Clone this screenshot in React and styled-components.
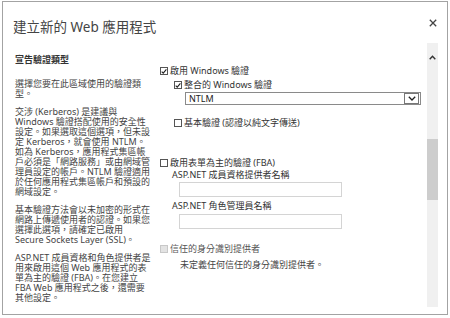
import React from "react";
import styled, { createGlobalStyle } from "styled-components";

const GlobalStyle = createGlobalStyle`
  html, body { margin: 0; padding: 0; background: #fff; }
  body { font-family: "Noto Sans", "Noto Sans CJK TC", sans-serif; }
  * { box-sizing: border-box; }
`;

const Dialog = styled.div`
  margin: 1px 0 0 2px;
  width: 446px;
  height: 314px;
  border: 1px solid #a3a3a3;
  background: #fff;
  display: flex;
  flex-direction: column;
`;

const Header = styled.div`
  height: 41px;
  flex: none;
  display: flex;
  align-items: center;
  justify-content: space-between;
  padding: 2px 7px 0 10px;
`;

const Title = styled.h1`
  margin: 0;
  font-size: 13.5px;
  font-weight: 400;
  color: #444;
  line-height: 20px;
  padding-top: 6px;
`;

const CloseButton = styled.button`
  border: 0;
  background: none;
  padding: 0;
  width: 14px;
  height: 14px;
  display: flex;
  align-items: center;
  justify-content: center;
  margin-top: -2px;
`;

const Body = styled.div`
  flex: 1;
  min-height: 0;
  display: flex;
  padding: 0 9px 7px 0;
`;

const Viewport = styled.div`
  flex: 1;
  overflow: hidden;
  display: flex;
  align-items: flex-start;
`;

const Help = styled.div`
  width: 157px;
  flex: none;
  padding: 12px 0 0 12px;
  font-size: 9px;
  line-height: 10px;
  color: #444;
  white-space: nowrap;
`;

const HelpHeading = styled.div`
  font-weight: 700;
  color: #333;
  margin-bottom: 14px;
`;

const HelpPara = styled.p`
  margin: 0 0 8px;
`;

const Form = styled.div`
  flex: 1;
  display: flex;
  flex-direction: column;
  align-items: flex-start;
  padding-top: 22px;
  font-size: 9px;
  line-height: 12px;
  color: #333;
  white-space: nowrap;
`;

const CheckRow = styled.label`
  display: flex;
  align-items: center;
  gap: 2px;
  margin-left: ${(p) => p.$indent || 0}px;
  margin-top: ${(p) => p.$top || 0}px;
  color: ${(p) => (p.$disabled ? "#555" : "#333")};
`;

const Box = styled.span`
  width: 8px;
  height: 8px;
  flex: none;
  border: 1px solid ${(p) => (p.$disabled ? "#c8c8c8" : "#555")};
  background: ${(p) => (p.$disabled ? "#e3e3e3" : "#fff")};
  display: flex;
  align-items: center;
  justify-content: center;
`;

const Select = styled.div`
  margin: 1px 0 0 25px;
  width: 236px;
  height: 13px;
  border: 1px solid #8a8a8a;
  display: flex;
  align-items: center;
  font-size: 9px;
  color: #222;
`;

const SelectText = styled.span`
  flex: 1;
  padding-left: 3px;
  line-height: 11px;
`;

const SelectArrow = styled.span`
  width: 15px;
  height: 11px;
  margin-right: 1px;
  border: 1px solid #777;
  display: flex;
  align-items: center;
  justify-content: center;
`;

const FieldLabel = styled.div`
  margin: ${(p) => p.$top || 0}px 0 0 12px;
  color: #333;
`;

const TextInput = styled.div`
  margin: ${(p) => p.$top || 0}px 0 0 19px;
  width: 163px;
  height: 15px;
  border: 1px solid #d4d4d4;
  background: #fff;
`;

const Note = styled.div`
  margin: 4px 0 0 20px;
  color: #444;
`;

const Scrollbar = styled.div`
  width: 11px;
  flex: none;
  background: #f0f0f0;
  display: flex;
  flex-direction: column;
  align-items: center;
`;

const ScrollUp = styled.div`
  height: 20px;
  width: 100%;
  display: flex;
  align-items: flex-end;
  justify-content: center;
  padding-bottom: 3px;
`;

const Thumb = styled.div`
  margin-top: 76px;
  width: 100%;
  height: 61px;
  background: #cdcdcd;
`;

const Check = () => (
  <svg width="7" height="7" viewBox="0 0 7 7">
    <path d="M0.8 3.6 L2.6 5.4 L6.3 0.9" fill="none" stroke="#222" strokeWidth="1.3" />
  </svg>
);

const Checkbox = ({ checked, disabled, children, indent, top }) => (
  <CheckRow $indent={indent} $top={top} $disabled={disabled}>
    <Box $disabled={disabled}>{checked && <Check />}</Box>
    <span>{children}</span>
  </CheckRow>
);

const Lines = ({ lines }) =>
  lines.map((l, i) => (
    <React.Fragment key={i}>
      {l}
      {i < lines.length - 1 && <br />}
    </React.Fragment>
  ));

const paras = [
  ["選擇您要在此區域使用的驗證類", "型。"],
  [
    "交涉 (Kerberos) 是建議與",
    "Windows 驗證搭配使用的安全性",
    "設定。如果選取這個選項，但未設",
    "定 Kerberos，就會使用 NTLM。",
    "如為 Kerberos，應用程式集區帳",
    "戶必須是「網路服務」或由網域管",
    "理員設定的帳戶。NTLM 驗證適用",
    "於任何應用程式集區帳戶和預設的",
    "網域設定。",
  ],
  [
    "基本驗證方法會以未加密的形式在",
    "網路上傳遞使用者的認證。如果您",
    "選擇此選項，請確定已啟用",
    "Secure Sockets Layer (SSL)。",
  ],
  [
    "ASP.NET 成員資格和角色提供者是",
    "用來啟用這個 Web 應用程式的表",
    "單為主的驗證 (FBA)。在您建立",
    "FBA Web 應用程式之後，還需要",
    "其他設定。",
  ],
];

export default function App() {
  return (
    <>
      <GlobalStyle />
      <Dialog>
        <Header>
          <Title>建立新的 Web 應用程式</Title>
          <CloseButton aria-label="關閉">
            <svg width="8" height="8" viewBox="0 0 8 8">
              <path d="M0.8 0.8 L7.2 7.2 M7.2 0.8 L0.8 7.2" stroke="#444" strokeWidth="1.3" />
            </svg>
          </CloseButton>
        </Header>
        <Body>
          <Viewport>
            <Help>
              <HelpHeading>宣告驗證類型</HelpHeading>
              {paras.map((p, i) => (
                <HelpPara key={i}>
                  <Lines lines={p} />
                </HelpPara>
              ))}
            </Help>
            <Form>
              <Checkbox checked>啟用 Windows 驗證</Checkbox>
              <Checkbox checked indent={14} top={2}>
                整合的 Windows 驗證
              </Checkbox>
              <Select>
                <SelectText>NTLM</SelectText>
                <SelectArrow>
                  <svg width="8" height="5" viewBox="0 0 8 5">
                    <path d="M0.8 0.8 L4 4 L7.2 0.8" fill="none" stroke="#222" strokeWidth="1.3" />
                  </svg>
                </SelectArrow>
              </Select>
              <Checkbox indent={14} top={12}>
                基本驗證 (認證以純文字傳送)
              </Checkbox>
              <Checkbox top={28}>啟用表單為主的驗證 (FBA)</Checkbox>
              <FieldLabel>ASP.NET 成員資格提供者名稱</FieldLabel>
              <TextInput $top={1} />
              <FieldLabel $top={3}>ASP.NET 角色管理員名稱</FieldLabel>
              <TextInput $top={2} />
              <Checkbox disabled top={14}>
                信任的身分識別提供者
              </Checkbox>
              <Note>未定義任何信任的身分識別提供者。</Note>
            </Form>
          </Viewport>
          <Scrollbar>
            <ScrollUp>
              <svg width="7" height="5" viewBox="0 0 7 5">
                <path d="M0.7 4.2 L3.5 1.2 L6.3 4.2" fill="none" stroke="#333" strokeWidth="1.4" />
              </svg>
            </ScrollUp>
            <Thumb />
          </Scrollbar>
        </Body>
      </Dialog>
    </>
  );
}
